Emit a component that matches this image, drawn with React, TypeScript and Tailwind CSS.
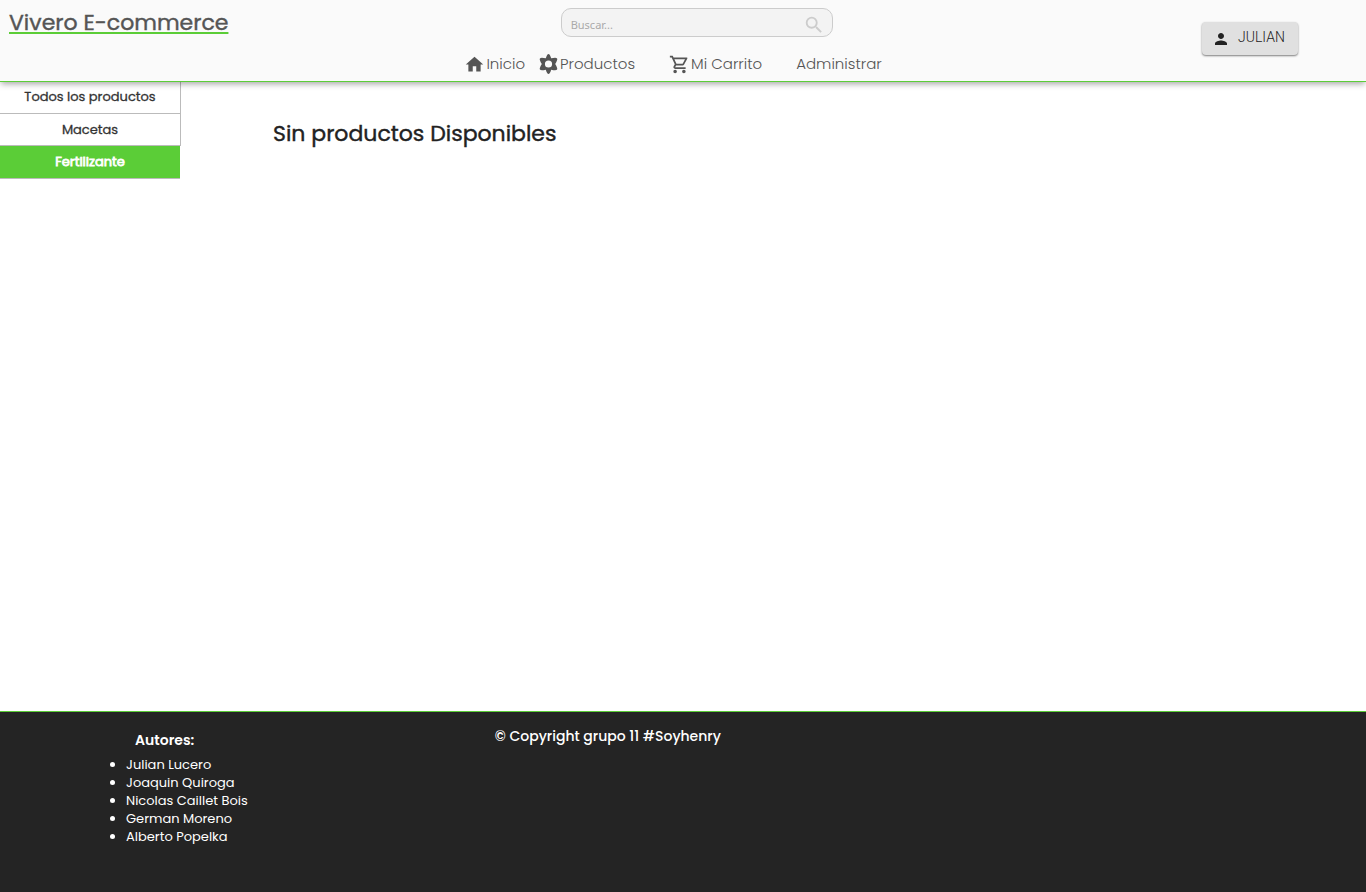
import { MdHome, MdOutlineShoppingCart, MdPerson, MdSearch } from "react-icons/md";

const authors = [
  "Julian Lucero",
  "Joaquin Quiroga",
  "Nicolas Caillet Bois",
  "German Moreno",
  "Alberto Popelka",
];

function ProductsIcon() {
  return (
    <svg viewBox="0 0 20 22" className="h-[22px] w-5" fill="currentColor" fillRule="evenodd" aria-hidden="true">
      <path d="M9.500 1c.9 0 1.800 1.400 2.700 4.300 3-.7 5.200-.9 5.900.2.600 1-.3 2.800-1.900 5.500 1.600 2.700 2.500 4.500 1.900 5.500-.7 1.100-2.900.9-5.900.2-.9 2.900-1.800 4.300-2.700 4.300s-1.800-1.400-2.700-4.300c-3 .7-5.200.9-5.900-.2-.6-1 .3-2.800 1.900-5.500C1.200 8.300.3 6.500.9 5.500c.7-1.100 2.900-.9 5.900-.2C7.700 2.400 8.600 1 9.500 1Zm0 6.400a3.600 3.600 0 1 0 0 7.200 3.600 3.600 0 0 0 0-7.200Z" />
    </svg>
  );
}

function Header() {
  return (
    <header className="relative grid h-[82px] shrink-0 grid-cols-[34%_34%_32%] border-b border-[#5bcd37] bg-[#fafafa] text-[#555] shadow-[0_3px_6px_-1px_rgba(0,0,0,0.35)]">
      <div className="pt-[7px] pl-[9px]">
        <a href="#inicio" className="text-[22px] leading-8 underline decoration-[#5bcd37] decoration-2 underline-offset-2 [-webkit-text-stroke:0.4px_#555]">
          Vivero E-commerce
        </a>
      </div>
      <div className="flex flex-col pt-2">
        <form className="flex h-[29px] w-[272px] items-center self-center rounded-[10px] border border-[#ccc] bg-[#f3f3f3] pr-[7px] pl-[9px]">
          <input
            type="search"
            aria-label="Buscar"
            placeholder="Buscar..."
            className="min-w-0 flex-1 bg-transparent pt-1.5 font-['Noto_Sans',sans-serif] text-[11px] outline-none placeholder:text-[#aaa]"
          />
          <button type="button" aria-label="Buscar" className="pt-1 text-[#ccc]">
            <MdSearch className="size-[22px]" />
          </button>
        </form>
        <nav className="flex items-center pt-4 text-[15px] leading-[22px] font-light whitespace-nowrap">
          <a href="#inicio" className="mr-3.5 flex items-center gap-px">
            <MdHome className="size-[21px]" />
            Inicio
          </a>
          <a href="#productos" className="mr-[34px] flex items-center gap-px">
            <ProductsIcon />
            Productos
          </a>
          <a href="#carrito" className="mr-[34px] flex items-center gap-px">
            <MdOutlineShoppingCart className="size-[21px]" />
            Mi Carrito
          </a>
          <a href="#administrar">Administrar</a>
        </nav>
      </div>
      <div className="flex items-start justify-end pt-[22px] pr-[68px]">
        <button
          type="button"
          className="flex h-[33px] w-24 items-center gap-2 rounded bg-[#e0e0e0] pl-2.5 font-['Roboto',sans-serif] text-sm font-light text-[#222] shadow-[0_1px_2px_rgba(0,0,0,0.5)]"
        >
          <MdPerson className="size-[18px]" />
          <span className="pb-[3px]">JULIAN</span>
        </button>
      </div>
    </header>
  );
}

function Sidebar() {
  return (
    <nav aria-label="Categorías" className="flex w-[181px] shrink-0 flex-col text-center text-[13px] text-[#333]">
      <a href="#todos" className="h-8 border-r border-b border-[#bbb] leading-[30px] [-webkit-text-stroke:0.3px_#333]">
        Todos los productos
      </a>
      <a href="#macetas" className="h-8 border-r border-b border-[#bbb] leading-8 [-webkit-text-stroke:0.3px_#333]">
        Macetas
      </a>
      <a href="#fertilizante" aria-current="page" className="mr-px h-[33px] border-b border-[#bbb] bg-[#5bcd37] leading-8 text-white [-webkit-text-stroke:0.8px_#fff]">
        Fertilizante
      </a>
    </nav>
  );
}

export default function App() {
  return (
    <div className="flex min-h-screen flex-col bg-white font-['Poppins','Inter',sans-serif]">
      <Header />
      <div className="flex flex-1">
        <Sidebar />
        <main className="flex-1 pt-9 pl-[92px]">
          <h1 className="text-[22px] leading-8 text-[#222] [-webkit-text-stroke:0.4px_#222]">Sin productos Disponibles</h1>
        </main>
      </div>
      <footer className="grid min-h-[181px] shrink-0 grid-cols-[36%_1fr] border-t border-[#5bcd37] bg-[#242424] text-white">
        <section className="pt-[17px] pl-[126px]">
          <h2 className="pl-[9px] text-sm leading-[22px] font-semibold">Autores:</h2>
          <ul className="list-disc pt-[5px] text-[13px] leading-[18px]">
            {authors.map((name) => (
              <li key={name}>{name}</li>
            ))}
          </ul>
        </section>
        <p className="pt-[13px] pl-[3px] text-sm leading-[22px] font-medium">© Copyright grupo 11 #Soyhenry</p>
      </footer>
    </div>
  );
}
